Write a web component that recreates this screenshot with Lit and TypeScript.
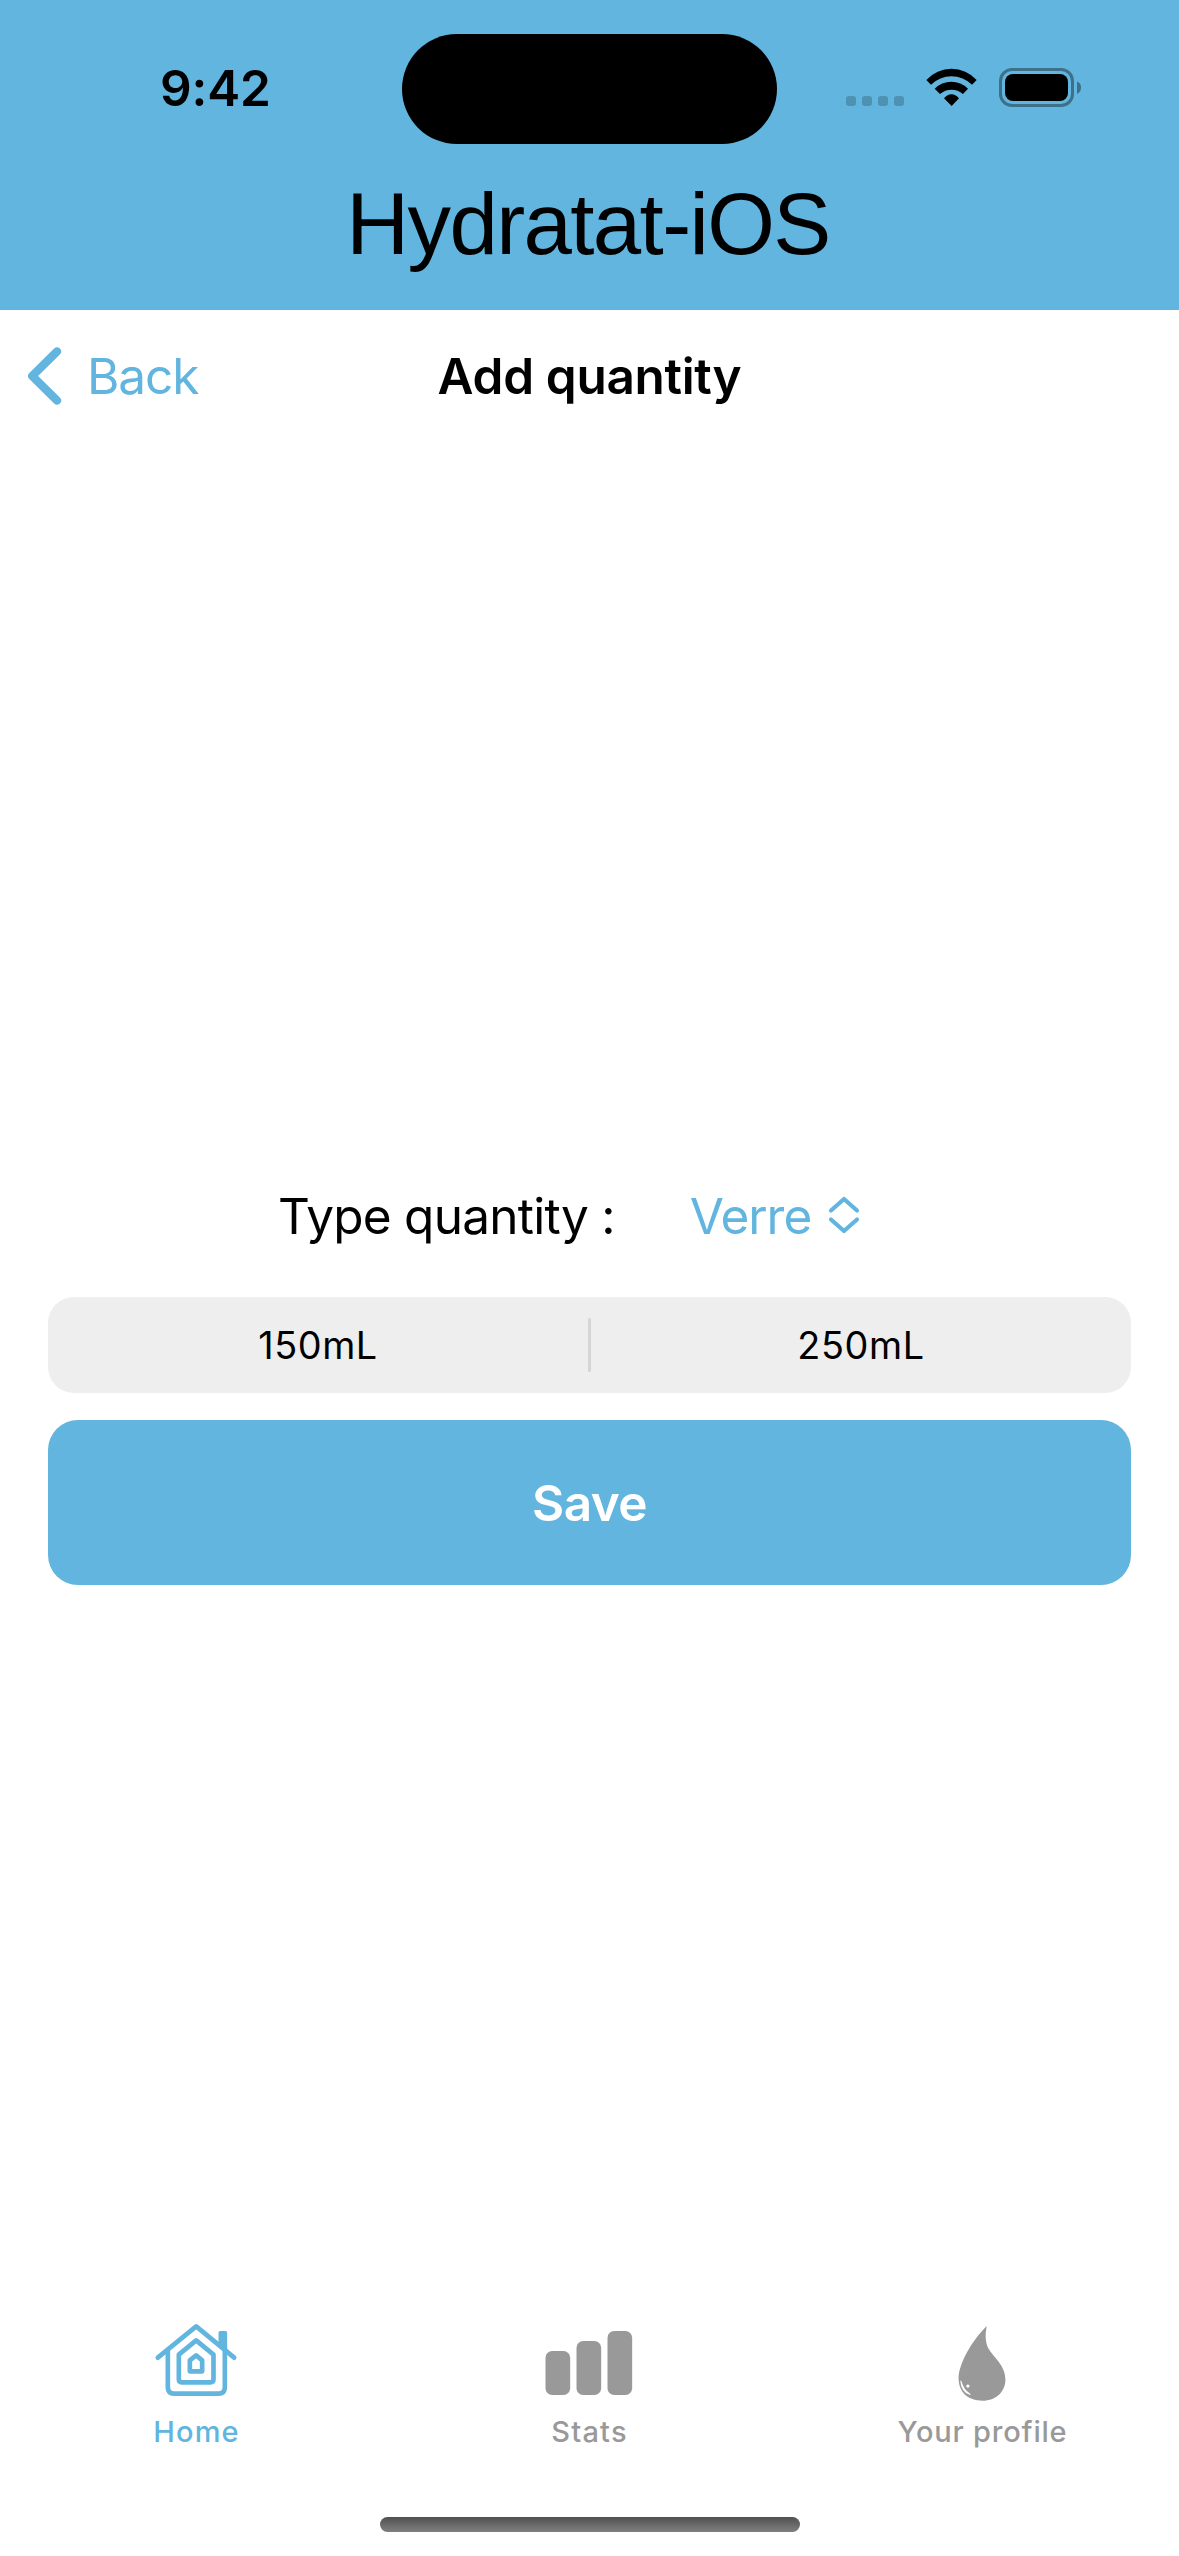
import { LitElement, html, svg, css } from "lit";
import { customElement, property } from "lit/decorators.js";

const houseIcon = svg`
  <g fill="none" stroke="currentColor" stroke-width="14" stroke-linecap="round" stroke-linejoin="round">
    <path d="M82 173 197 79 311 173"/>
    <path d="M112 152V262Q112 281 131 281H264Q283 281 283 262V152" stroke-linecap="butt"/>
    <path d="M145 164 197 121 249 164V238Q249 247 240 247H154Q145 247 145 238Z"/>
    <path d="M178 181 197 166 215 181V214H178Z"/>
  </g>
  <path d="M264 130V98Q264 93 269 93H285Q290 93 290 98V156Z" fill="currentColor"/>`;

const barsIcon = svg`
  <g fill="currentColor">
    <rect x="75" y="153" width="74" height="132" rx="20"/>
    <rect x="168" y="123" width="74" height="162" rx="20"/>
    <rect x="261" y="93" width="74" height="192" rx="20"/>
  </g>`;

const dropIcon = svg`
  <path fill="currentColor" d="M319 78C313 104 315 130 324 146C338 172 375 196 375 239C375 276 347 303 306 303C262 303 234 278 234 235C234 192 275 120 319 78Z"/>
  <path fill="#fff" d="M239 242Q242 242 243 245Q249 269 269 282Q272 285 268 286Q241 276 239 242Z"/>
  <circle cx="262" cy="259" r="5" fill="#fff"/>`;

@customElement("tab-item")
class TabItem extends LitElement {
  @property() label = "";
  @property() box = "";
  @property({ attribute: false }) icon: unknown;
  static styles = css`
    :host { display: flex; flex-direction: column; align-items: center; color: #999; }
    :host([active]) { color: #61b5df; }
    svg { display: block; width: 90px; height: 81px; }
    .label { margin-top: 11px; font: 500 29px/40px Inter, sans-serif; letter-spacing: var(--tracking, 1.2px); white-space: nowrap; }
  `;
  render() {
    return html`<svg viewBox=${this.box} preserveAspectRatio="xMidYMin meet">${this.icon}</svg><span class="label">${this.label}</span>`;
  }
}

@customElement("app-root")
class AppRoot extends LitElement {
  static styles = css`
    :host {
      display: flex; flex-direction: column; width: 1179px; height: 2556px;
      background: #fff; color: #000; overflow: hidden;
      font: 400 49.5px/60px Inter, sans-serif; white-space: nowrap;
    }
    svg { flex: none; }
    .header { height: 310px; background: #61b5df; box-sizing: border-box; padding-top: 33.5px; }
    .status { display: flex; align-items: center; height: 110.5px; padding-right: 98px; }
    .time { width: 242px; padding-left: 160px; margin-bottom: 1.5px; font-weight: 600; letter-spacing: -0.14px; }
    .island { width: 375px; height: 110.5px; border-radius: 56px; background: #000; }
    .indicators { display: flex; gap: 22px; margin: 0 0 1.5px auto; }
    .indicators svg { display: block; height: 40px; }
    .brand { margin-top: 30px; padding-right: 3px; text-align: center; font: 400 87px/100px "Liberation Sans", sans-serif; letter-spacing: -1.62px; }
    .nav { display: grid; grid-template-columns: 1fr auto 1fr; align-items: center; height: 132px; }
    .back { display: flex; align-items: center; gap: 23px; padding-left: 26px; color: #61b5df; letter-spacing: -1.05px; }
    .title { font-weight: 600; letter-spacing: -0.31px; }
    .main { flex: 1; display: flex; flex-direction: column; padding: 744px 48px 0; }
    .type { display: flex; align-items: center; height: 60px; padding-left: 230px; letter-spacing: -0.73px; }
    .picker { display: flex; align-items: center; gap: 17px; margin-left: 75px; color: #61b5df; letter-spacing: -1.03px; }
    .segments { display: flex; align-items: center; height: 96px; margin-top: 51px; border-radius: 26px; background: #eee; font-size: 37.8px; }
    .segment { flex: 1; text-align: center; font-weight: 430; letter-spacing: 0.6px; }
    .divider { width: 3px; height: 54px; border-radius: 2px; background: #d5d5d5; }
    .save { display: flex; align-items: center; justify-content: center; height: 165px; margin-top: 27px; border-radius: 30px; background: #61b5df; color: #fff; font-weight: 600; letter-spacing: -0.61px; }
    .tabs { display: grid; grid-template-columns: repeat(3, 1fr); height: 197px; }
    .profile { --tracking: 0.78px; }
    .home-bar { align-self: center; width: 420px; height: 15px; margin-bottom: 24px; border-radius: 8px; background: linear-gradient(#505050, #808080); }
  `;
  render() {
    return html`
      <header class="header">
        <div class="status">
          <span class="time">9:42</span>
          <span class="island"></span>
          <div class="indicators">
            <svg width="58" viewBox="0 0 58 40" fill="#4e92b3">
              <rect x="0" y="28" width="10" height="10" rx="3"/><rect x="16" y="28" width="10" height="10" rx="3"/>
              <rect x="32" y="28" width="10" height="10" rx="3"/><rect x="48" y="28" width="10" height="10" rx="3"/>
            </svg>
            <svg width="51" viewBox="438 144 153 120">
              <path d="M439 180A102 102 0 0 1 590 180L576 194A88 88 0 0 0 453 194ZM464 206A70 70 0 0 1 564 206L549 222A52 52 0 0 0 480 222ZM492 235A27 27 0 0 1 537 235L515 258Z"/>
            </svg>
            <svg width="82" viewBox="0 0 82 40">
              <rect x="1.5" y="1.5" width="72" height="36" rx="11.5" fill="none" stroke="#3d7189" stroke-width="3"/>
              <rect x="6" y="6" width="63" height="27" rx="8"/>
              <path d="M78 13.500Q82 15 82 19.500Q82 24 78 26Z" fill="#3d6f87"/>
            </svg>
          </div>
        </div>
        <div class="brand">Hydratat-iOS</div>
      </header>
      <nav class="nav">
        <div class="back">
          <svg width="38" height="60" viewBox="0 0 38 60"><path d="M31 5.500 6.200 30 31 54.500" fill="none" stroke="currentColor" stroke-width="8.200" stroke-linecap="round" stroke-linejoin="round"/></svg>
          <span>Back</span>
        </div>
        <span class="title">Add quantity</span>
      </nav>
      <main class="main">
        <div class="type">
          <span>Type quantity :</span>
          <div class="picker">
            <span>Verre</span>
            <svg width="32" height="40" viewBox="0 0 32 40" fill="none" stroke="currentColor" stroke-width="4.200" stroke-linecap="round" stroke-linejoin="round"><path d="M3 14.500 16 3 29 14.500M3 23.500 16 35 29 23.500"/></svg>
          </div>
        </div>
        <div class="segments">
          <span class="segment">150mL</span><span class="divider"></span><span class="segment">250mL</span>
        </div>
        <div class="save">Save</div>
      </main>
      <div class="tabs">
        <tab-item active label="Home" box="64.5 60 270 240" .icon=${houseIcon}></tab-item>
        <tab-item label="Stats" box="73.5 60 270 240" .icon=${barsIcon}></tab-item>
        <tab-item class="profile" label="Your profile" box="172.5 60 270 244" .icon=${dropIcon}></tab-item>
      </div>
      <div class="home-bar"></div>`;
  }
}
